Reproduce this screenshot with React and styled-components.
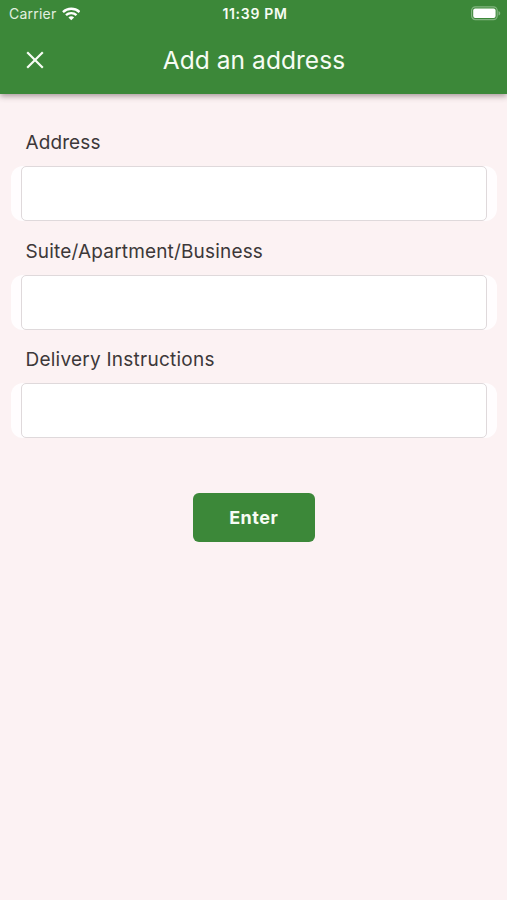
import React from "react";
import styled, { createGlobalStyle } from "styled-components";

const GlobalStyle = createGlobalStyle`
  * { box-sizing: border-box; }
  body {
    margin: 0;
    background: #fcf2f3;
    font-family: Inter, "Liberation Sans", sans-serif;
  }
`;

const Screen = styled.main`
  display: flex;
  flex-direction: column;
  min-height: 900px;
  background: #fcf2f3;
`;

const Header = styled.header`
  height: 94px;
  background: #3c8839;
  color: #f7fcf4;
  box-shadow: 0 2px 6px rgba(60, 35, 40, 0.46);
`;

const StatusBar = styled.div`
  display: grid;
  grid-template-columns: 1fr auto 1fr;
  align-items: center;
  height: 27px;
  padding: 0 6px 0 9px;
`;

const Carrier = styled.div`
  display: flex;
  align-items: center;
  gap: 5px;
  color: #e2f0e0;
  font-size: 14px;
  letter-spacing: 0.23px;
`;

const Clock = styled.time`
  font-size: 14px;
  font-weight: 600;
  letter-spacing: 0.7px;
`;

const BatteryIcon = styled.svg`
  justify-self: end;
`;

const NavBar = styled.div`
  display: grid;
  grid-template-columns: 70px 1fr 70px;
  align-items: center;
  height: 65px;
`;

const CloseButton = styled.button`
  display: flex;
  justify-content: center;
  width: 70px;
  padding: 0;
  border: 0;
  background: none;
  color: inherit;
`;

const Title = styled.h1`
  margin: 0;
  padding-left: 1px;
  text-align: center;
  font-size: 24.5px;
  font-weight: 400;
  letter-spacing: 0.05px;
`;

const Form = styled.form`
  display: flex;
  flex-direction: column;
  padding: 24px 10px 0 10.5px;
`;

const Field = styled.label`
  display: flex;
  flex-direction: column;
  height: 108.6px;
`;

const LabelText = styled.span`
  height: 48px;
  padding-left: 15px;
  color: #3d3839;
  font-size: 19px;
  line-height: 50px;
  letter-spacing: ${({ $tracking }) => $tracking};
`;

const InputShell = styled.span`
  display: flex;
  height: 55px;
  padding: 0 10px;
  border-radius: 12px;
  background: #fffdfe;
`;

const Input = styled.input`
  width: 100%;
  height: 55px;
  padding: 0 12px;
  border: 1.5px solid #dfd9db;
  border-radius: 5px;
  outline: none;
  background: #fff;
  font: inherit;
`;

const SubmitButton = styled.button`
  align-self: center;
  width: 122px;
  height: 49px;
  margin-top: 49px;
  padding: 0;
  border: 0;
  border-radius: 6px;
  background: #3c8839;
  color: #f7fcf4;
  font: 700 18px Inter, "Liberation Sans", sans-serif;
  letter-spacing: 0.5px;
`;

const fields = [
  { name: "address", label: "Address", tracking: "0.1px" },
  { name: "suite", label: "Suite/Apartment/Business", tracking: "0.17px" },
  { name: "instructions", label: "Delivery Instructions", tracking: "0.24px" },
];

export default function App() {
  return (
    <Screen>
      <GlobalStyle />
      <Header>
        <StatusBar>
          <Carrier>
            <span>Carrier</span>
            <svg width="18.5" height="14" viewBox="0 0 19 14" fill="none" stroke="#fff" strokeWidth="2.5" aria-hidden="true">
              <path d="M1 5C5.7 .6 13.3 .6 18 5" />
              <path d="M4.1 8.2c3-2.8 7.8-2.8 10.8 0" />
              <path d="M6.6 10.5c1.6-1.5 4.2-1.5 5.8 0L9.5 13.5Z" fill="#fff" stroke="none" />
            </svg>
          </Carrier>
          <Clock>11:39 PM</Clock>
          <BatteryIcon width="31" height="15" viewBox="0 0 31 15" aria-hidden="true">
            <rect x="1.6" y="0.8" width="25.6" height="12.8" rx="3.8" fill="none" stroke="#82b580" strokeWidth="1.2" />
            <rect x="3.2" y="2.4" width="22.4" height="9.6" rx="2" fill="#fff" />
            <path d="M28.5 4.9c2.3.8 2.3 3.8 0 4.6Z" fill="#82b580" />
          </BatteryIcon>
        </StatusBar>
        <NavBar>
          <CloseButton type="button" aria-label="Close">
            <svg width="18" height="18" viewBox="0 0 18 18" fill="none" stroke="currentColor" strokeWidth="2.2" aria-hidden="true">
              <path d="m1.2 1.2 15.6 15.6M16.8 1.2 1.2 16.8" />
            </svg>
          </CloseButton>
          <Title>Add an address</Title>
        </NavBar>
      </Header>
      <Form>
        {fields.map(({ name, label, tracking }) => (
          <Field key={name}>
            <LabelText $tracking={tracking}>{label}</LabelText>
            <InputShell>
              <Input name={name} />
            </InputShell>
          </Field>
        ))}
        <SubmitButton type="button">Enter</SubmitButton>
      </Form>
    </Screen>
  );
}
